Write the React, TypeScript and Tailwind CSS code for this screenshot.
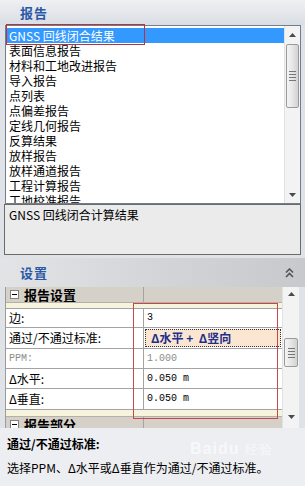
import React from "react";

const FONT = "font-['SimSun','Noto_Sans_CJK_SC',sans-serif]";

const reports = [
  "表面信息报告",
  "材料和工地改进报告",
  "导入报告",
  "点列表",
  "点偏差报告",
  "定线几何报告",
  "反算结果",
  "放样报告",
  "放样通道报告",
  "工程计算报告",
  "工地校准报告",
];

const UpArrow = () => (
  <svg width="7" height="4" viewBox="0 0 7 4">
    <path d="M0 4 L3.5 0 L7 4 Z" fill="#4a4a4a" />
  </svg>
);

const DownArrow = () => (
  <svg width="7" height="4" viewBox="0 0 7 4">
    <path d="M0 0 L3.5 4 L7 0 Z" fill="#4a4a4a" />
  </svg>
);

const Thumb = ({ className }: { className: string }) => (
  <div
    className={`mx-[1px] rounded-[2px] border border-[#9a9a9a] bg-gradient-to-r from-[#f4f4f4] via-[#e6e6e6] to-[#d2d2d2] flex items-center justify-center ${className}`}
  >
    <div className="flex flex-col gap-[2px]">
      <div className="w-[7px] h-px bg-[#777]" />
      <div className="w-[7px] h-px bg-[#777]" />
      <div className="w-[7px] h-px bg-[#777]" />
      <div className="w-[7px] h-px bg-[#777]" />
    </div>
  </div>
);

const Category = ({ label, top }: { label: string; top?: boolean }) => (
  <div
    className={`h-[16px] flex bg-[#d5d1c9] border-[#b5b1a8] ${
      top ? "border-b" : "border-t"
    }`}
  >
    <div className="w-[138px] shrink-0 border-r border-[#a3a3a3] flex items-center">
      <div className="ml-[4px] w-[9px] h-[9px] border border-[#808080] bg-white flex items-center justify-center">
        <div className="w-[5px] h-px bg-black" />
      </div>
      <span className="ml-[5px] text-[13px] leading-[16px] font-bold text-black">
        {label}
      </span>
    </div>
  </div>
);

const PropRow = ({
  label,
  value,
  dim,
  focus,
  h,
}: {
  label: string;
  value: React.ReactNode;
  dim?: boolean;
  focus?: boolean;
  h: string;
}) => (
  <div className={`flex ${h} border-b border-[#a3a3a3]`}>
    <div
      className={`w-[138px] shrink-0 border-r border-[#a3a3a3] pl-[3px] flex items-center leading-[16px] ${
        dim
          ? "text-[#8c8c8c] font-['Liberation_Mono',monospace] text-[10px]"
          : "text-black text-[12px]"
      }`}
    >
      {label}
    </div>
    <div
      className={`flex-1 flex items-center pl-[3px] leading-[16px] ${
        focus
          ? "bg-[#fbe6d2] border border-dotted border-[#333] m-[1px] pl-[5px]"
          : ""
      }`}
    >
      {value}
    </div>
  </div>
);

const Mono = ({ children, dim }: { children: string; dim?: boolean }) => (
  <span
    className={`font-['Liberation_Mono',monospace] text-[10px] whitespace-pre ${
      dim ? "text-[#8c8c8c]" : "text-black"
    }`}
  >
    {children}
  </span>
);

const App = () => {
  return (
    <div
      className={`w-[305px] h-[486px] overflow-hidden bg-[#dfe2e7] relative ${FONT}`}
    >
      {/* 报告 header */}
      <div className="h-[25px] flex items-center pl-[20px] bg-gradient-to-b from-[#eef0f3] to-[#dadde3]">
        <span className="text-[13px] font-bold text-[#2a59a6] tracking-[1px]">
          报告
        </span>
      </div>

      {/* report list */}
      <div className="ml-[5px] w-[296px] h-[179px] border border-[#6f7d8c] bg-white flex">
        <div className="flex-1 pt-[2px] overflow-hidden">
          <div className="h-[15px] bg-[#3399ff] text-white text-[12px] leading-[15px] pl-[3px] whitespace-nowrap">
            GNSS 回线闭合结果
          </div>
          {reports.map((r) => (
            <div
              key={r}
              className="h-[15px] text-[12px] leading-[15px] pl-[3px] text-black whitespace-nowrap"
            >
              {r}
            </div>
          ))}
        </div>
        <div className="w-[16px] bg-[#f3f3f3] border-l border-[#e2e2e2] flex flex-col">
          <div className="h-[18px] flex items-center justify-center">
            <UpArrow />
          </div>
          <Thumb className="h-[64px]" />
          <div className="flex-1" />
          <div className="h-[16px] flex items-center justify-center">
            <DownArrow />
          </div>
        </div>
      </div>

      {/* description */}
      <div className="ml-[4px] w-[297px] h-[51px] border border-[#6b6b6b] bg-[#ebebeb] pl-[4px] pt-[2px] text-[12px] leading-[16px] text-black">
        GNSS 回线闭合计算结果
      </div>

      {/* 设置 header */}
      <div className="mt-[3px] h-[29px] flex items-center justify-between pl-[20px] pr-[11px] bg-gradient-to-r from-[#e3e4e6] via-[#d3d5d8] to-[#c7c9cc]">
        <span className="text-[13px] font-bold text-[#2a59a6] tracking-[1px]">
          设置
        </span>
        <svg width="9" height="10" viewBox="0 0 9 10">
          <path d="M1 4.5 L4.5 1 L8 4.5" stroke="#555" strokeWidth="1.6" fill="none" />
          <path d="M1 9 L4.5 5.5 L8 9" stroke="#555" strokeWidth="1.6" fill="none" />
        </svg>
      </div>

      {/* property grid */}
      <div className="ml-[5px] w-[294px] h-[141px] flex">
        <div className="flex-1 bg-[#f7f4de] border-l border-[#9c9c9c] overflow-hidden">
          <Category label="报告设置" top />
          <div className="h-[5px]" />
          <div className="bg-white border-t border-[#a3a3a3]">
            <PropRow h="h-[19px]" label="边:" value={<Mono>3</Mono>} />
            <PropRow
              h="h-[21px]"
              label="通过/不通过标准:"
              focus
              value={
                <span className="text-[12px] font-bold text-[#1d2f8c] whitespace-pre">
                  Δ水平 +  Δ竖向
                </span>
              }
            />
            <PropRow
              h="h-[20px]"
              label="PPM:"
              dim
              value={<Mono dim>1.000</Mono>}
            />
            <PropRow h="h-[20px]" label="Δ水平:" value={<Mono>0.050 m</Mono>} />
            <PropRow h="h-[21px]" label="Δ垂直:" value={<Mono>0.050 m</Mono>} />
          </div>
          <div className="h-[6px]" />
          <Category label="报告部分" />
        </div>
        <div className="w-[17px] bg-[#f3f3f3] border-l border-[#e2e2e2] flex flex-col">
          <div className="h-[14px] flex items-center justify-center">
            <UpArrow />
          </div>
          <div className="h-[37px]" />
          <Thumb className="h-[29px]" />
          <div className="flex-1" />
          <div className="h-[22px] flex items-center justify-center">
            <DownArrow />
          </div>
        </div>
      </div>

      {/* help panel */}
      <div className="h-[58px] bg-[#eceef1] pl-[7px] pt-[8px]">
        <div className="text-[12px] font-bold text-black leading-[16px]">
          通过/不通过标准:
        </div>
        <div className="mt-[8px] text-[12px] text-black leading-[16px] whitespace-nowrap">
          选择PPM、Δ水平或Δ垂直作为通过/不通过标准。
        </div>
      </div>

      {/* annotation boxes */}
      <div className="absolute left-[6px] top-[24px] w-[139px] h-[21px] border-[1.5px] border-[#b6343c]" />
      <div className="absolute left-[133px] top-[303px] w-[145px] h-[116px] border-[1.5px] border-[#c8474c]" />

      {/* watermark */}
      <div className="absolute left-[190px] top-[440px] text-[16px] leading-[18px] font-bold text-white/60 font-['Liberation_Sans',sans-serif] tracking-[1px]">
        Baidu <span className="text-[13px] font-normal">经验</span>
      </div>
    </div>
  );
};

export default App;
